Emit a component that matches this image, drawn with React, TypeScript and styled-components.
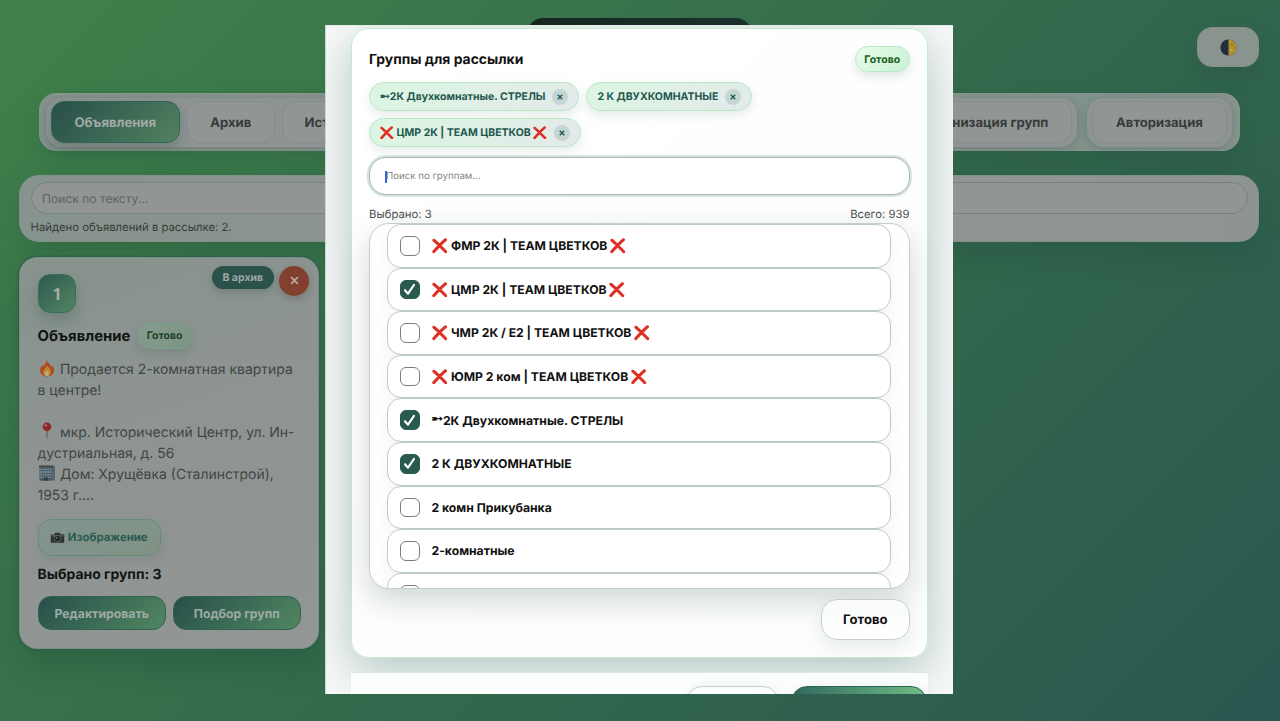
import React from 'react';
import styled, { createGlobalStyle, css } from 'styled-components';

const GlobalStyle = createGlobalStyle`
  *, *::before, *::after { box-sizing: border-box; }
  html, body { margin: 0; padding: 0; }
  body {
    width: 1280px;
    height: 721px;
    overflow: hidden;
    font-family: Inter, "Liberation Sans", "DejaVu Sans", sans-serif;
    text-rendering: geometricPrecision;
    color: #111;
  }
  button, input { font-family: inherit; text-rendering: inherit; }
`;

/* ---------- page ---------- */

const Page = styled.div`
  width: 1280px;
  height: 721px;
  overflow: hidden;
  padding: 18px 21px 0 19px;
  background: linear-gradient(135deg, #40814a 0%, #346a4c 52%, #2a5750 100%);
`;

const Header = styled.header`
  display: grid;
  grid-template-columns: 1fr 225px 1fr;
  height: 75px;
`;

const Brand = styled.div`
  grid-column: 2;
  height: 49px;
  border-radius: 16px;
  background: linear-gradient(90deg, #16251f, #1b312d);
`;

const ThemeButton = styled.button`
  justify-self: end;
  display: grid;
  place-items: center;
  width: 62px;
  height: 40px;
  margin-top: 9px;
  padding: 0;
  border: 1px solid #849089;
  border-radius: 15px;
  background: #8a948f;
  box-shadow: 0 8px 22px rgba(20, 50, 40, 0.18);
`;

const Nav = styled.nav`
  display: flex;
  justify-content: space-between;
  align-items: center;
  width: 1201px;
  height: 58px;
  margin: 0 auto;
  padding: 0 6.5px;
  border: 1px solid #879790;
  border-radius: 17px;
  background: linear-gradient(90deg, #88938e, #8b9490 70%, #7f938a 92%, #899490);
  box-shadow: 0 10px 26px rgba(20, 60, 45, 0.16);
`;

const TabGroup = styled.div`
  display: flex;
  align-items: center;
  gap: 7.5px;
  height: 49px;
  padding: 0 5px;
  border-radius: 16px;
  background: #8e9493;
  box-shadow: 0 2px 8px rgba(50, 75, 68, 0.28);

  &:nth-child(2) {
    margin: 0 10px 0 auto;
  }
`;

const Tab = styled.button<{ $active?: boolean; $width: number }>`
  width: ${(p) => p.$width}px;
  height: 42px;
  padding: 2px 0 0;
  border: 1px solid ${(p) => (p.$active ? '#2e6453' : '#858c8a')};
  border-radius: 13px;
  background: ${(p) => (p.$active ? 'linear-gradient(135deg, #274e49, #528160)' : '#919695')};
  box-shadow: ${(p) => (p.$active ? '0 5px 12px rgba(35, 75, 62, 0.3)' : 'none')};
  color: ${(p) => (p.$active ? '#a2aaa7' : '#373b3a')};
  font-size: 13.1px;
  font-weight: 700;
  white-space: nowrap;
`;

const SearchPanel = styled.section`
  height: 67px;
  margin-top: 24px;
  padding: 5.5px 10px 0 10.5px;
  border: 1px solid #84918b;
  border-radius: 20px;
  background: linear-gradient(90deg, #87938d, #8f9593 45%, #8d9492);
  box-shadow: 0 14px 32px rgba(20, 55, 45, 0.2);
`;

const PageInput = styled.div`
  display: flex;
  align-items: center;
  height: 32.5px;
  padding: 1px 0 0 10.5px;
  border: 1px solid #75827d;
  border-radius: 16px;
  background: #919695;
  color: #5d6361;
  font-size: 12.1px;
`;

const Found = styled.div`
  margin-top: 6px;
  color: #363b39;
  font-size: 11.3px;
  line-height: 15px;
`;

/* ---------- listing card ---------- */

const Card = styled.article`
  display: flex;
  flex-direction: column;
  align-items: flex-start;
  width: 299.5px;
  height: 392px;
  margin-top: 14.5px;
  padding: 16.5px 17.5px 0;
  border: 1px solid #7b8f86;
  border-radius: 18px;
  background: linear-gradient(160deg, #87938d, #8e9492 40%, #929695);
  box-shadow: 0 0 0 1.5px #2d6249, 0 14px 32px rgba(24, 65, 50, 0.32);
`;

const CardTop = styled.div`
  display: flex;
  justify-content: space-between;
  width: 271.5px;
  height: 39px;
`;

const Index = styled.div`
  display: grid;
  place-items: center;
  width: 38.5px;
  height: 39px;
  border: 1px solid #37715a;
  border-radius: 12px;
  background: linear-gradient(135deg, #2e5950, #528562);
  box-shadow: 0 7px 14px rgba(40, 80, 62, 0.28);
  color: #a5aeaa;
  font-size: 16px;
  font-weight: 700;
`;

const CardActions = styled.div`
  display: flex;
  gap: 5px;
  margin-top: -8.5px;
`;

const ArchiveButton = styled.button`
  width: 62.5px;
  height: 23px;
  padding: 1px 0 0;
  border: 0;
  border-radius: 12px;
  background: #2a514a;
  box-shadow: 0 3px 7px rgba(35, 70, 60, 0.28);
  color: #9ba8a4;
  font-size: 10.5px;
  font-weight: 700;
`;

const RemoveButton = styled.button`
  display: grid;
  place-items: center;
  width: 30px;
  height: 30px;
  padding: 0;
  border: 0;
  border-radius: 50%;
  background: #84402f;
  box-shadow: 0 3px 7px rgba(60, 60, 50, 0.3);
`;

const CardTitle = styled.h2`
  display: flex;
  align-items: center;
  gap: 7px;
  margin: 9.5px 0 0;
  height: 26px;
  color: #101513;
  font-size: 14.85px;
  font-weight: 700;
`;

const Status = styled.span<{ $dim?: boolean }>`
  display: inline-flex;
  align-items: center;
  justify-content: center;
  width: 54.5px;
  height: 26px;
  border-radius: 13px;
  font-size: 10.5px;
  font-weight: 700;
  ${(p) =>
    p.$dim
      ? css`
          border: 1px solid #7a9f86;
          background: linear-gradient(135deg, #879a8e, #7a9684);
          box-shadow: 0 4px 9px rgba(50, 90, 70, 0.2);
          color: #1d4426;
        `
      : css`
          border: 1px solid #b9e8c4;
          background: linear-gradient(135deg, #e8fcec, #c9f2d3);
          box-shadow: 0 5px 10px rgba(40, 95, 80, 0.13);
          color: #1b5e20;
        `}
`;

const Description = styled.p`
  margin: 10.5px 0 0;
  width: 270px;
  color: #404644;
  font-size: 13.95px;
  line-height: 21px;
  white-space: pre;
`;

const Emoji = styled.svg<{ $size: number; $gap?: number; $drop?: number }>`
  display: inline-block;
  flex: none;
  width: ${(p) => p.$size}px;
  height: ${(p) => p.$size}px;
  margin-right: ${(p) => p.$gap ?? 0}px;
  vertical-align: ${(p) => p.$drop ?? -3}px;
`;

const ImageButton = styled.button`
  display: flex;
  align-items: center;
  justify-content: center;
  width: 123px;
  height: 36.5px;
  margin-top: 13px;
  padding: 0;
  border: 1px solid #648c7c;
  border-radius: 13px;
  background: linear-gradient(135deg, #839491, #819284);
  box-shadow: 2px 4px 9px rgba(70, 100, 88, 0.14);
  color: #2a5b50;
  font-size: 11.4px;
  font-weight: 700;
`;

const Chosen = styled.div`
  margin-top: 10.5px;
  color: #101513;
  font-size: 13.95px;
  font-weight: 700;
  line-height: 18px;
`;

const CardButtons = styled.div`
  display: flex;
  gap: 6.5px;
  margin-top: 12px;
`;

const GradientButton = styled.button`
  width: 128.5px;
  height: 34px;
  padding: 0;
  border: 1px solid #2d6350;
  border-radius: 13px;
  background: linear-gradient(135deg, #26504a, #528661);
  color: #9faaa5;
  font-size: 12.25px;
  font-weight: 700;
`;

/* ---------- dialog ---------- */

const Dialog = styled.div`
  position: fixed;
  left: 325px;
  top: 25px;
  width: 628px;
  height: 668.5px;
  overflow: hidden;
  padding: 2px 25px 0;
  border-top: 1px solid #e5ebe8;
  border-left: 1px solid #c9d6cf;
  background: #f7f9f8;
`;

const Sheet = styled.section`
  display: flex;
  flex-direction: column;
  width: 576.5px;
  height: 629.5px;
  padding: 17px 17px 0;
  border: 1px solid #c3ecca;
  border-radius: 18px;
  background: linear-gradient(135deg, #fff 0%, #fdfefd 60%, #fdfefe 100%);
  box-shadow: 0 14px 48px rgba(30, 86, 76, 0.31);
`;

const SheetHeader = styled.header`
  display: flex;
  align-items: center;
  justify-content: space-between;
  height: 26px;
`;

const SheetTitle = styled.h1`
  margin: 0;
  padding-top: 1px;
  color: #111;
  font-size: 13.9px;
  font-weight: 700;
`;

const Chips = styled.div`
  display: flex;
  flex-wrap: wrap;
  gap: 7px;
  margin-top: 10px;
`;

const Chip = styled.span`
  display: inline-flex;
  align-items: center;
  height: 29px;
  padding: 0 10px;
  border: 1px solid #b8e6c3;
  border-radius: 15px;
  background: linear-gradient(135deg, #dcf6e2, #e3eaea);
  box-shadow: 0 4px 10px rgba(40, 95, 80, 0.12);
  color: #1f594e;
  font-size: 10.5px;
  font-weight: 700;
  white-space: nowrap;
`;

const ChipRemove = styled.button`
  display: grid;
  place-items: center;
  width: 16px;
  height: 16px;
  margin-left: 7px;
  padding: 0;
  border: 0;
  border-radius: 50%;
  background: #c6d6d4;
`;

const GroupSearch = styled.div`
  display: flex;
  align-items: center;
  flex: none;
  height: 38px;
  margin-top: 10px;
  padding: 1px 0 0 15px;
  border: 1px solid #a5bbb6;
  border-radius: 17px;
  background: #fff;
  box-shadow: 0 0 0 2px #d8e2e0;
  color: #858585;
  font-size: 9.7px;
`;

const Caret = styled.span`
  width: 1.5px;
  height: 12px;
  margin-right: -0.5px;
  background: #3267e0;
`;

const Counts = styled.div`
  display: flex;
  justify-content: space-between;
  margin-top: 12px;
  height: 16px;
  color: #4c4f4e;
  font-size: 11.3px;
  line-height: 15px;
`;

const GroupList = styled.ul`
  flex: none;
  height: 365.5px;
  margin: 0;
  padding: 0 17px;
  overflow: hidden;
  border: 1px solid #c3cfcc;
  border-radius: 20px;
  background: #fefefe;
  box-shadow: 0 12px 30px rgba(30, 60, 55, 0.2);
  list-style: none;
`;

const GroupRow = styled.li`
  display: flex;
  align-items: center;
  width: 504px;
  height: 43.6px;
  padding-left: 12px;
  border: 1px solid #bccbc7;
  border-radius: 14px;
  background: #fff;
  box-shadow: 0 6px 14px rgba(30, 70, 60, 0.05);
  color: #111;
  font-size: 12.18px;
  font-weight: 700;
`;

const Arrow = styled.span`
  font-family: "DejaVu Sans", sans-serif;
  font-size: 1.12em;
  line-height: 1;
  -webkit-text-stroke: 0.5px currentColor;
`;

const Box = styled.span<{ $checked?: boolean }>`
  display: grid;
  place-items: center;
  flex: none;
  width: 19.5px;
  height: 19.5px;
  margin-right: 12px;
  border: 1px solid ${(p) => (p.$checked ? '#285a50' : '#7d7d7d')};
  border-radius: 6px;
  background: ${(p) => (p.$checked ? '#285a50' : '#fff')};
`;

const DoneButton = styled.button`
  align-self: flex-end;
  width: 88.5px;
  height: 40.5px;
  margin-top: 10.5px;
  padding: 2px 0 0;
  border: 1px solid #c4d0cd;
  border-radius: 16px;
  background: linear-gradient(180deg, #f9fafa, #fff);
  box-shadow: 0 8px 20px rgba(30, 70, 60, 0.1);
  color: #111;
  font-size: 13.1px;
  font-weight: 700;
`;

const Footer = styled.footer`
  display: flex;
  justify-content: flex-end;
  gap: 12px;
  position: relative;
  width: 577.5px;
  height: 60px;
  margin-top: 14.5px;
  margin-left: -0.5px;
  padding: 13px 1px 0;
  border-top: 1px solid #dfe5e3;
  background: #fcfdfd;
`;

const FooterButton = styled.div<{ $primary?: boolean }>`
  width: ${(p) => (p.$primary ? 136 : 93)}px;
  height: 40px;
  border: 1px solid ${(p) => (p.$primary ? '#2c6455' : '#c4d0cd')};
  border-radius: 16px;
  background: ${(p) => (p.$primary ? 'linear-gradient(90deg, #32685f, #70bd86)' : '#fdfefe')};
  box-shadow: 0 4px 16px rgba(30, 70, 60, 0.1);
`;

/* ---------- pictograms ---------- */

const CrossMark = ({ size = 16, gap = 0 }: { size?: number; gap?: number }) => (
  <Emoji viewBox="0 0 16 16" $size={size} $gap={gap} aria-hidden>
    <path d="M1.900 2.300C5.500 5 10.500 10.500 14.200 14.200M13.900 1.800C10 5 5.500 10 1.800 14.100" fill="none" stroke="#df2f23" strokeWidth="3.100" strokeLinecap="round" />
  </Emoji>
);

const SmallX = ({ size, color, width }: { size: number; color: string; width: number }) => (
  <svg width={size} height={size} viewBox="0 0 8 8" aria-hidden>
    <path d="M1 1L7 7M7 1L1 7" stroke={color} strokeWidth={width} fill="none" />
  </svg>
);

const Flame = () => (
  <Emoji viewBox="0 0 18 18" $size={18} $gap={0.5} aria-hidden>
    <path d="M8.7.7c.7 3 4.2 4.3 4.2 7.6.7-.5 1-1.4 1-2.3 1.300 1.400 2.200 3.400 2.200 5.500 0 3.600-3 6-7 6s-7-2.400-7-6c0-2.400 1-4 2.300-5.500 0 1 .3 1.700.9 2.200C5.500 5.200 8.700 4 8.700.7z" fill="#ad4c22" />
    <path d="M9 6.200c.4 1.900 3.700 3.200 3.700 6.800 0 2.600-1.500 4.300-3.700 4.300S5.200 15.700 5.200 13.100c0-2.700 3.500-3.700 3.800-6.900z" fill="#bd8a32" />
    <path d="M9.200 11c.3 1.300 1.700 2 1.700 3.700 0 1.500-.8 2.500-1.900 2.500s-2-.9-2-2.400C7 13.200 9 12.600 9.200 11z" fill="#b9aa7c" />
  </Emoji>
);

const Pin = () => (
  <Emoji viewBox="0 0 18 18" $size={18} $gap={0.5} aria-hidden>
    <path d="M8.300 7h1.400l-.3 9.500h-.8z" fill="#59605e" />
    <circle cx="9" cy="4.700" r="4.300" fill="#8f2926" />
    <circle cx="7.700" cy="3.300" r="1.200" fill="#b4706b" />
  </Emoji>
);

const Building = () => (
  <Emoji viewBox="0 0 18 18" $size={18} $gap={0.5} aria-hidden>
    <path d="M3 2.500h14V16.500H3z" fill="#5a6468" />
    <path d="M1 1.500h14.500v2H1z" fill="#3e474a" />
    <path d="M1.500 3.500h12.500v13H1.500z" fill="#49555a" />
    <path d="M2.200 5.300h11.200M2.200 8h11.200M2.200 10.700h11.200M2.200 13.400h11.200" stroke="#708b9b" strokeWidth="1.800" strokeDasharray="1.900 .5" />
    <path d="M5.800 13.500h4V16.500h-4z" fill="#2f393d" />
  </Emoji>
);

const Camera = () => (
  <Emoji viewBox="0 0 16 16" $size={15} $gap={2.5} aria-hidden>
    <path d="M.8 4.500h3.800L5.500 3h5l.9 1.500h3.800v9H.8z" fill="#303433" />
    <path d="M1 6.200h14" stroke="#5c6361" strokeWidth="1" />
    <circle cx="8" cy="9" r="3.700" fill="#636967" />
    <circle cx="8" cy="9" r="3" fill="#242828" />
    <circle cx="7.200" cy="8.200" r=".9" fill="#697779" />
    <path d="M2 5h2" stroke="#8a8f8d" />
  </Emoji>
);

const HalfMoon = () => (
  <svg width="17" height="17" viewBox="0 0 17 17" aria-hidden>
    <circle cx="8.500" cy="8.500" r="8.100" fill="#232e3c" />
    <path d="M8.500.4a8.100 8.100 0 0 1 0 16.200z" fill="#ae902f" />
    <circle cx="12" cy="5.500" r="1.300" fill="#8f782b" />
    <circle cx="11.300" cy="11" r="1.700" fill="#bea346" />
    <circle cx="14" cy="9" r=".8" fill="#94782c" />
  </svg>
);

const Check = () => (
  <svg width="13" height="13" viewBox="0 0 13 13" aria-hidden>
    <path d="M2 7.200L5 10.700L11 1.800" fill="none" stroke="#fff" strokeWidth="2.100" strokeLinecap="round" strokeLinejoin="round" />
  </svg>
);

/* ---------- data ---------- */

interface Group {
  name: string;
  checked?: boolean;
  crossed?: boolean;
  arrow?: boolean;
}

const groups: Group[] = [
  { name: 'ФМР 2К | TEAM ЦВЕТКОВ', crossed: true },
  { name: 'ЦМР 2К | TEAM ЦВЕТКОВ', crossed: true, checked: true },
  { name: 'ЧМР 2К / Е2 | TEAM ЦВЕТКОВ', crossed: true },
  { name: 'ЮМР 2 ком | TEAM ЦВЕТКОВ', crossed: true },
  { name: '2К Двухкомнатные. СТРЕЛЫ', arrow: true, checked: true },
  { name: '2 К ДВУХКОМНАТНЫЕ', checked: true },
  { name: '2 комн Прикубанка' },
  { name: '2-комнатные' },
  { name: '' },
];

const selected: Group[] = [
  { name: '2К Двухкомнатные. СТРЕЛЫ', arrow: true },
  { name: '2 К ДВУХКОМНАТНЫЕ' },
  { name: 'ЦМР 2К | TEAM ЦВЕТКОВ', crossed: true },
];

const GroupName = ({ group, size }: { group: Group; size: number }) => (
  <>
    {group.crossed && <CrossMark size={size} gap={size > 14 ? 4 : 3} />}
    {group.arrow && <Arrow>➸</Arrow>}
    <span>{group.name}</span>
    {group.crossed && (
      <>
        <span>&nbsp;</span>
        <CrossMark size={size} />
      </>
    )}
  </>
);

export default function App() {
  return (
    <>
      <GlobalStyle />
      <Page>
        <Header>
          <Brand />
          <ThemeButton aria-label="Тема">
            <HalfMoon />
          </ThemeButton>
        </Header>
        <Nav>
          <TabGroup>
            <Tab $active $width={128.5}>Объявления</Tab>
            <Tab $width={87.5}>Архив</Tab>
            <Tab $width={101}>История</Tab>
          </TabGroup>
          <TabGroup>
            <Tab $width={175}>Организация групп</Tab>
          </TabGroup>
          <TabGroup>
            <Tab $width={135}>Авторизация</Tab>
          </TabGroup>
        </Nav>
        <SearchPanel>
          <PageInput>Поиск по тексту...</PageInput>
          <Found>Найдено объявлений в рассылке: 2.</Found>
        </SearchPanel>
        <Card>
          <CardTop>
            <Index>1</Index>
            <CardActions>
              <ArchiveButton>В архив</ArchiveButton>
              <RemoveButton aria-label="Удалить">
                <SmallX size={9} color="#b7aaa5" width={1.5} />
              </RemoveButton>
            </CardActions>
          </CardTop>
          <CardTitle>
            Объявление <Status $dim>Готово</Status>
          </CardTitle>
          <Description>
            <Flame /> Продается 2-комнатная квартира{'\n'}в центре!{'\n\n'}
            <Pin /> мкр. Исторический Центр, ул. Ин-{'\n'}дустриальная, д. 56{'\n'}
            <Building /> Дом: Хрущёвка (Сталинстрой),{'\n'}1953 г....
          </Description>
          <ImageButton>
            <Camera />
            Изображение
          </ImageButton>
          <Chosen>Выбрано групп: 3</Chosen>
          <CardButtons>
            <GradientButton>Редактировать</GradientButton>
            <GradientButton>Подбор групп</GradientButton>
          </CardButtons>
        </Card>
      </Page>

      <Dialog role="dialog">
        <Sheet>
          <SheetHeader>
            <SheetTitle>Группы для рассылки</SheetTitle>
            <Status>Готово</Status>
          </SheetHeader>
          <Chips>
            {selected.map((group) => (
              <Chip key={group.name}>
                <GroupName group={group} size={13.5} />
                <ChipRemove aria-label="Убрать">
                  <SmallX size={6} color="#1f594e" width={1.8} />
                </ChipRemove>
              </Chip>
            ))}
          </Chips>
          <GroupSearch>
            <Caret />
            Поиск по группам...
          </GroupSearch>
          <Counts>
            <span>Выбрано: 3</span>
            <span>Всего: 939</span>
          </Counts>
          <GroupList>
            {groups.map((group) => (
              <GroupRow key={group.name}>
                <Box $checked={group.checked}>{group.checked && <Check />}</Box>
                <GroupName group={group} size={15.5} />
              </GroupRow>
            ))}
          </GroupList>
          <DoneButton>Готово</DoneButton>
        </Sheet>
        <Footer>
          <FooterButton />
          <FooterButton $primary />
        </Footer>
      </Dialog>
    </>
  );
}
